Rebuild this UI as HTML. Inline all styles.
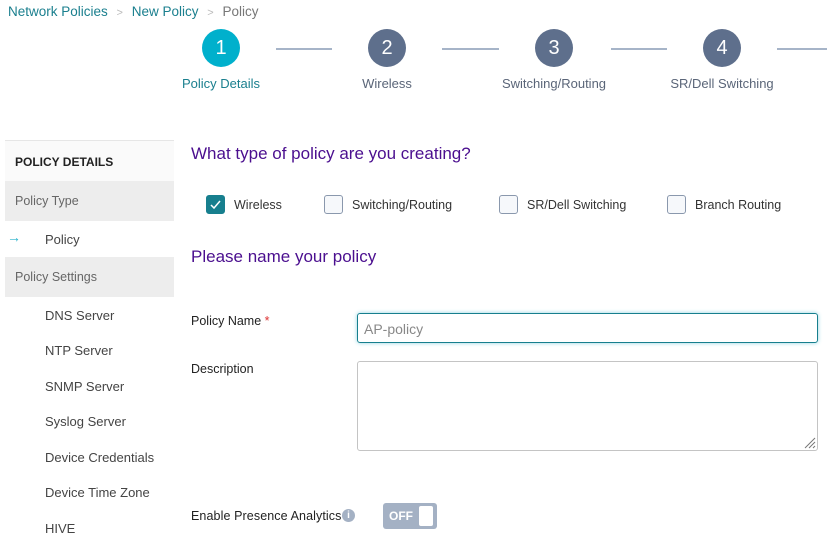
<!DOCTYPE html>
<html><head><meta charset="utf-8"><style>
*{box-sizing:border-box;margin:0;padding:0}
body{width:827px;height:541px;overflow:hidden;background:#fff;font-family:"Liberation Sans",sans-serif;position:relative;color:#333}
.a{position:absolute;white-space:nowrap}
.circ{position:absolute;width:38px;height:38px;border-radius:50%;color:#fff;font-size:20px;text-align:center;line-height:38px}
.ln{position:absolute;height:2px;background:#a6b4c8;top:48px}
.lab{position:absolute;font-size:13px;color:#5a6578;transform:translateX(-50%);top:76px}
.side{position:absolute;left:5px;width:169px;font-size:12.5px;color:#666;padding-left:10px}
.item{position:absolute;left:45px;font-size:13px;color:#444}
.cb{position:absolute;width:19px;height:19px;border:1px solid #8a98ad;border-radius:3px;background:#f6f8fb;top:195px}
.cl{position:absolute;font-size:12.5px;color:#333;top:198px}
</style></head><body>
<div class="a" style="left:8px;top:4px;font-size:13.5px;color:#1a7f8e">Network Policies <span style="color:#bbb;font-size:11px;margin:0 5px">&gt;</span> New Policy <span style="color:#bbb;font-size:11px;margin:0 5px">&gt;</span> <span style="color:#777">Policy</span></div>

<div class="circ" style="left:202px;top:29px;background:#00b0cc">1</div>
<div class="circ" style="left:368px;top:29px;background:#5e6f8c">2</div>
<div class="circ" style="left:535px;top:29px;background:#5e6f8c">3</div>
<div class="circ" style="left:703px;top:29px;background:#5e6f8c">4</div>
<div class="ln" style="left:276px;width:56px"></div>
<div class="ln" style="left:442px;width:57px"></div>
<div class="ln" style="left:611px;width:56px"></div>
<div class="ln" style="left:777px;width:50px"></div>
<div class="lab" style="left:221px;color:#1a7f8e">Policy Details</div>
<div class="lab" style="left:387px">Wireless</div>
<div class="lab" style="left:554px">Switching/Routing</div>
<div class="lab" style="left:722px">SR/Dell Switching</div>

<div class="side" style="top:140px;height:41px;background:#fafafa;border-top:1px solid #e6e6e6;font-weight:bold;color:#222;font-size:12px;line-height:42px">POLICY DETAILS</div>
<div class="side" style="top:181px;height:40px;background:#ededed;line-height:41px">Policy Type</div>
<div class="a" style="left:7px;top:229px;color:#2ab3cc;font-size:14px">→</div>
<div class="item" style="top:232px">Policy</div>
<div class="side" style="top:257px;height:40px;background:#ededed;line-height:41px">Policy Settings</div>
<div class="item" style="top:308px">DNS Server</div>
<div class="item" style="top:343px">NTP Server</div>
<div class="item" style="top:379px">SNMP Server</div>
<div class="item" style="top:414px">Syslog Server</div>
<div class="item" style="top:450px">Device Credentials</div>
<div class="item" style="top:485px">Device Time Zone</div>
<div class="item" style="top:521px">HIVE</div>

<div class="a" style="left:191px;top:144px;font-size:17px;color:#4b0f8f">What type of policy are you creating?</div>
<div class="cb" style="left:206px;background:#177f8e;border-color:#177f8e"><svg width="17" height="17" viewBox="0 0 17 17"><path d="M4 9l3 3 6-7" stroke="#fff" stroke-width="1.5" fill="none"/></svg></div>
<div class="cl" style="left:234px">Wireless</div>
<div class="cb" style="left:324px"></div>
<div class="cl" style="left:352px">Switching/Routing</div>
<div class="cb" style="left:499px"></div>
<div class="cl" style="left:527px">SR/Dell Switching</div>
<div class="cb" style="left:667px"></div>
<div class="cl" style="left:695px">Branch Routing</div>

<div class="a" style="left:191px;top:247px;font-size:17px;color:#4b0f8f">Please name your policy</div>

<div class="a" style="left:191px;top:314px;font-size:12.5px;color:#222">Policy Name <span style="color:#d33">*</span></div>
<div class="a" style="left:357px;top:313px;width:461px;height:30px;border:1px solid #177f8e;border-radius:3px;box-shadow:0 0 4px #8fd4e0;font-size:14px;color:#888;padding:7px 6px">AP-policy</div>
<div class="a" style="left:191px;top:362px;font-size:12.5px;color:#222">Description</div>
<div class="a" style="left:357px;top:361px;width:461px;height:90px;border:1px solid #c4c4c4;border-radius:3px">
<svg style="position:absolute;right:1px;bottom:1px" width="13" height="13"><path d="M12 2L2 12M12 6L6 12M12 10L10 12" stroke="#777" stroke-width="1"/></svg></div>

<div class="a" style="left:191px;top:509px;font-size:12.5px;color:#222;letter-spacing:0.1px">Enable Presence Analytics</div>
<div class="a" style="left:342px;top:509px;width:13px;height:13px;border-radius:50%;background:#a4b1c4;color:#fff;font-size:10px;font-weight:bold;text-align:center;line-height:13px">i</div>
<div class="a" style="left:383px;top:503px;width:54px;height:26px;border-radius:3px;background:#a4b1c4">
<span style="position:absolute;left:6px;top:6px;color:#fff;font-size:12px;font-weight:bold">OFF</span>
<span style="position:absolute;right:4px;top:3px;width:14px;height:20px;background:#fff;border-radius:2px"></span></div>
</body></html>
